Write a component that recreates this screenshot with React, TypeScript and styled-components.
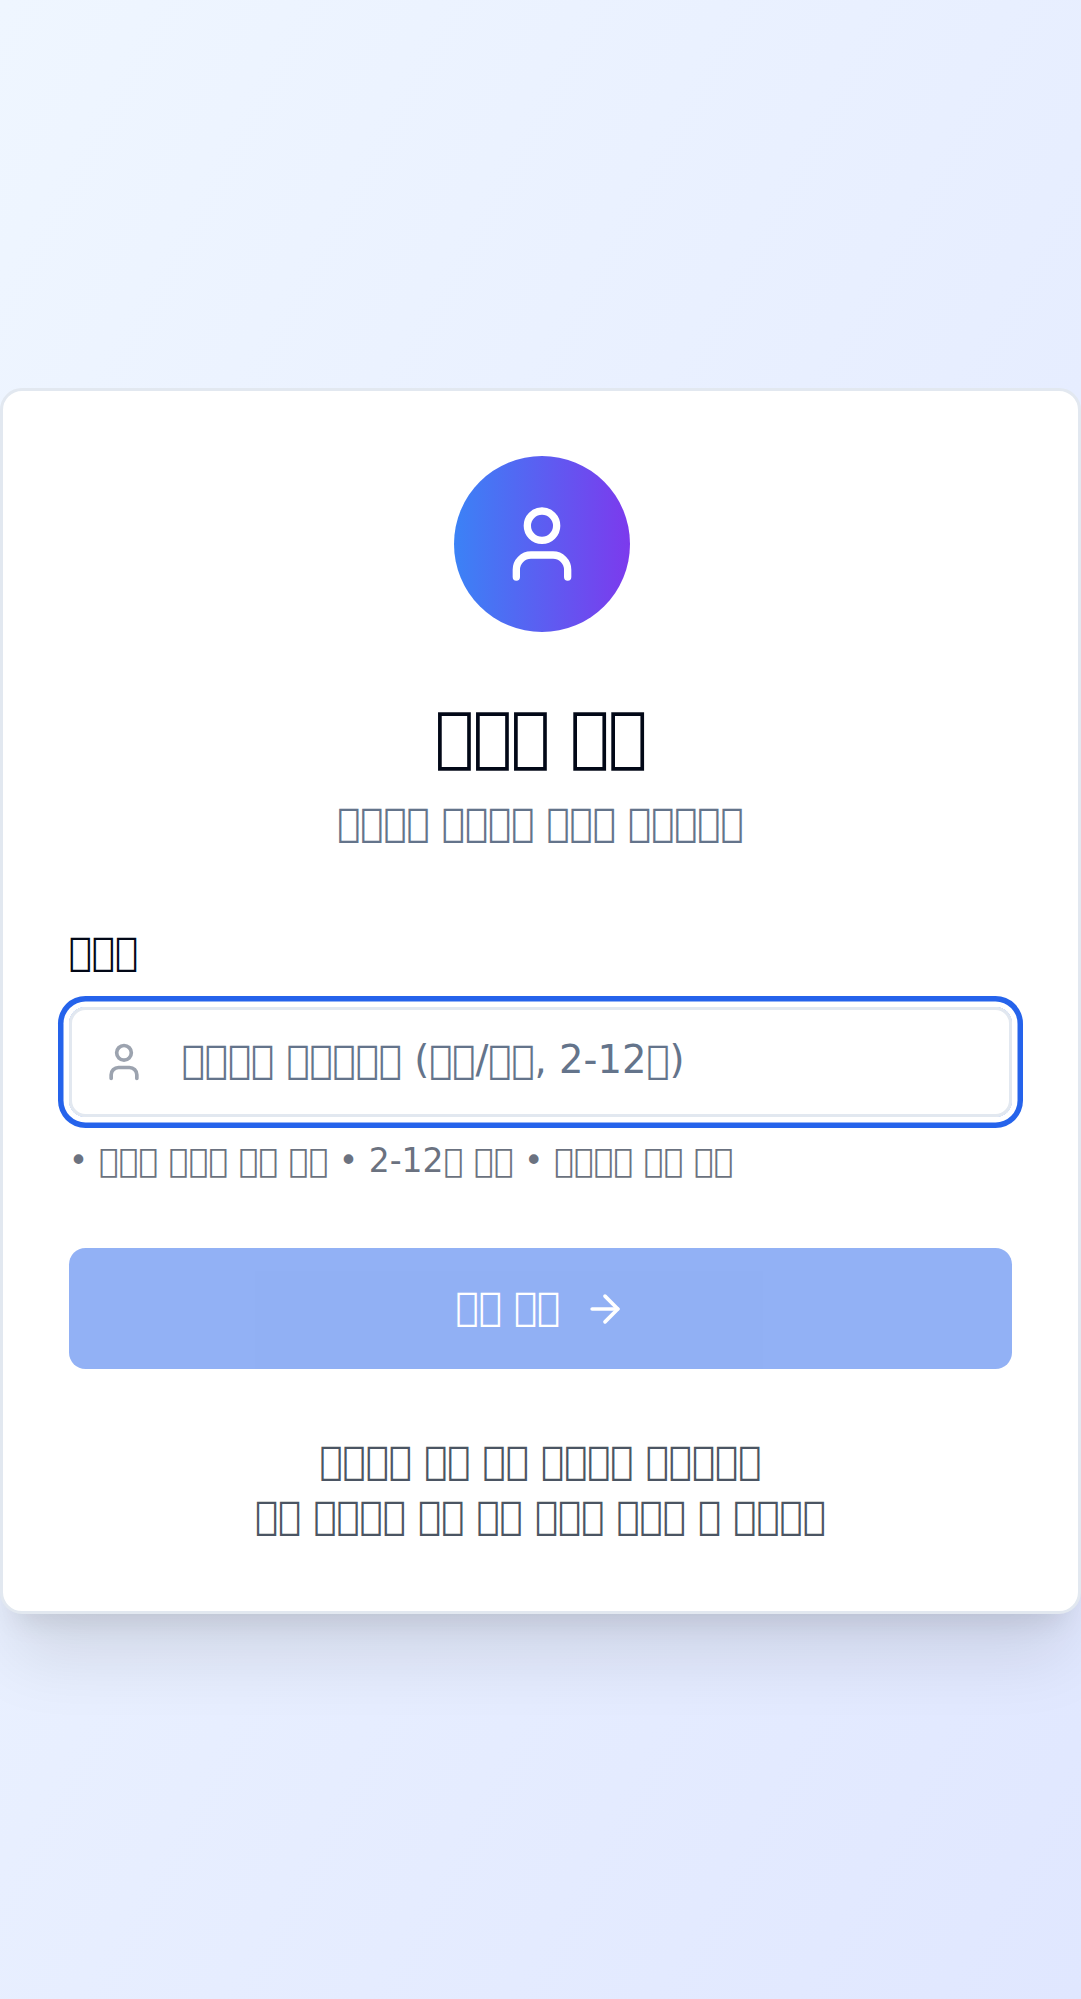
import React from "react";
import styled, { createGlobalStyle } from "styled-components";
import { User, ArrowRight } from "lucide-react";

const GlobalStyle = createGlobalStyle`
  *, *::before, *::after { box-sizing: border-box; }
  body { margin: 0; font-family: "DejaVu Sans", sans-serif; }
  h1, p, form { margin: 0; }
`;

/* Stand-in glyphs: each dot becomes a character with no glyph in any font. */
const tofu = (pattern: string) => pattern.replace(/\./g, "\u{10FF3A}");

const Page = styled.main`
  min-height: 1999px;
  width: 1081px;
  overflow: hidden;
  display: flex;
  flex-direction: column;
  justify-content: flex-start;
  padding-top: 388px;
  background: linear-gradient(to bottom right, #eff6ff, #e0e7ff);
`;

const Card = styled.section`
  width: 1080.75px;
  height: 1225.5px;
  padding: 65px 65.75px 0;
  border: 3px solid #e2e8f0;
  border-radius: 22px;
  background: #fff;
  color: #020817;
  box-shadow: 0 55px 68.75px -13.75px rgba(0, 0, 0, 0.1),
    0 22px 27.5px -16.5px rgba(0, 0, 0, 0.1);
`;

const Header = styled.header`
  display: flex;
  flex-direction: column;
  align-items: center;
  text-align: center;
`;

const Avatar = styled.div`
  display: flex;
  align-items: center;
  justify-content: center;
  width: 176px;
  height: 176px;
  margin-left: 2.5px;
  border-radius: 50%;
  color: #fff;
  background: linear-gradient(to right, #3b82f6, #7c3aed);
`;

const Title = styled.h1`
  margin-top: 61px;
  font-size: 66px;
  line-height: 88px;
  font-weight: 700;
  letter-spacing: -1.65px;
`;

const Subtitle = styled.p`
  margin-top: 14.4px;
  font-size: 38.5px;
  line-height: 55px;
  color: #64748b;
`;

const Form = styled.form`
  display: flex;
  flex-direction: column;
  margin-top: 74px;
`;

const Label = styled.label`
  font-size: 38.5px;
  line-height: 55px;
  font-weight: 500;
`;

const Field = styled.div`
  display: flex;
  align-items: center;
  height: 110px;
  margin-top: 27.6px;
  padding-left: 30px;
  border: 3px solid #e2e8f0;
  border-radius: 16.5px;
  box-shadow: 0 0 0 5.5px #fff, 0 0 0 11px #2563eb;
  color: #9ca3af;
`;

const Input = styled.input`
  flex: 1;
  min-width: 0;
  height: 100%;
  margin: 0;
  padding: 0 33px 5px 36px;
  border: 0;
  outline: 0;
  background: transparent;
  font: 38.5px "DejaVu Sans", sans-serif;
  &::placeholder { color: #64748b; opacity: 1; }
`;

const Hint = styled.p`
  margin-top: 21.8px;
  font-size: 33px;
  line-height: 44px;
  color: #6b7280;
`;

const Submit = styled.button`
  display: flex;
  align-items: center;
  justify-content: center;
  gap: 23px;
  height: 121px;
  margin: 65.4px 0 0;
  padding: 0 0 0 2px;
  border: 0;
  border-radius: 16.5px;
  background: #2563eb;
  opacity: 0.5;
  color: #fff;
  font: 500 38.5px "DejaVu Sans", sans-serif;
`;

const SubmitText = styled.span`
  padding-bottom: 4px;
`;

const Footer = styled.footer`
  margin-top: 63.4px;
  text-align: center;
  font-size: 38.5px;
  line-height: 55px;
  color: #4b5563;
`;

export default function App() {
  return (
    <>
      <GlobalStyle />
      <Page>
        <Card>
          <Header>
            <Avatar>
              <User size={88} />
            </Avatar>
            <Title>{tofu("... ..")}</Title>
            <Subtitle>{tofu(".... .... ... .....")}</Subtitle>
          </Header>
          <Form>
            <Label htmlFor="nickname">{tofu("...")}</Label>
            <Field>
              <User size={44} />
              <Input id="nickname" placeholder={tofu(".... ..... (../.., 2-12.)")} />
            </Field>
            <Hint>{tofu("• ... ... .. .. • 2-12. .. • .... .. ..")}</Hint>
            <Submit type="button">
              <SubmitText>{tofu(".. ..")}</SubmitText>
              <ArrowRight size={44} />
            </Submit>
          </Form>
          <Footer>
            <p>{tofu(".... .. .. .... .....")}</p>
            <p>{tofu(".. .... .. .. ... ... . ....")}</p>
          </Footer>
        </Card>
      </Page>
    </>
  );
}
